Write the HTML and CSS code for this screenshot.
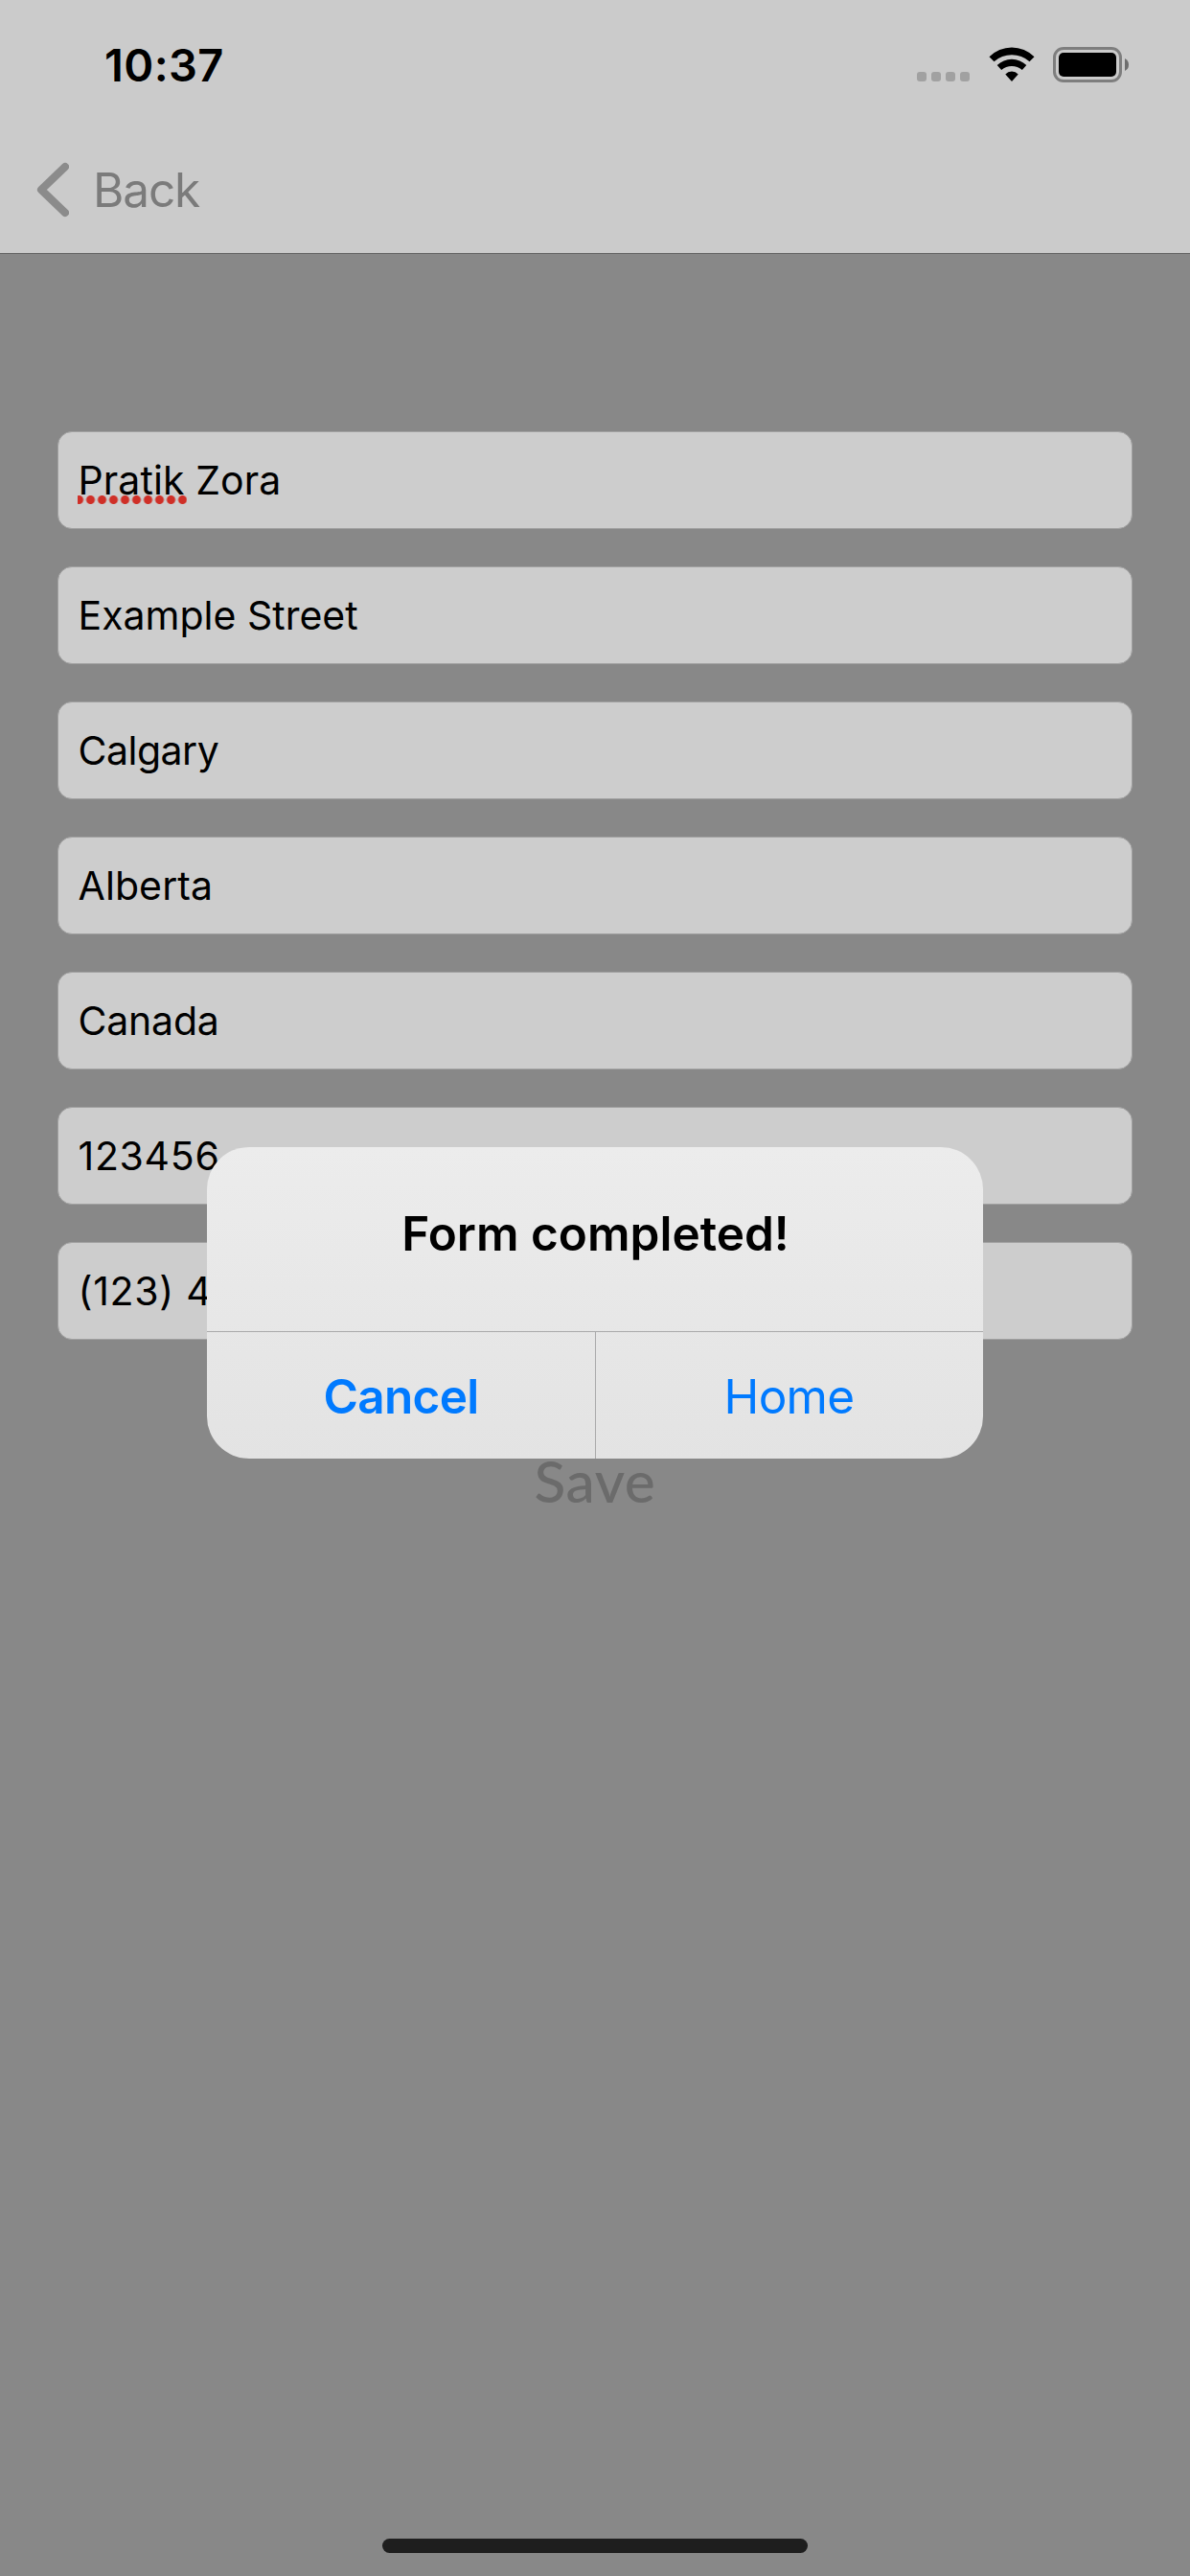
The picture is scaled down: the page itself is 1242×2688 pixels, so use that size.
FILE: index.html
```html
<!DOCTYPE html>
<html lang="en">
<head>
<meta charset="utf-8">
<title>Form</title>
<link rel="stylesheet" href="styles.css">
</head>
<body>
<div class="screen">
  <header class="header">
    <div class="status">
      <span class="time">10:37</span>
      <div class="indicators">
        <span class="cell"><i></i><i></i><i></i><i></i></span>
        <svg class="wifi" width="48" height="37" viewBox="0 0 48 37">
          <path d="M.5 10.3A33 33 0 0 1 47.5 10.3L42.5 15.3A27.8 27.8 0 0 0 5.5 15.3Z"/>
          <path d="M8.7 19A22 22 0 0 1 39.3 19L34.8 24A16.5 16.5 0 0 0 13.2 24Z"/>
          <path d="M17.3 28.4A9 9 0 0 1 30.7 28.4L24 36Z"/>
        </svg>
        <svg class="battery" width="80" height="37" viewBox="0 0 80 37">
          <rect x="1.5" y="1.5" width="69" height="34" rx="9.5" fill="none" stroke="#7e7e7e" stroke-width="3"/>
          <rect x="6" y="6" width="60" height="25" rx="5"/>
          <path d="M75 12Q79 14 79 18.5T75 25Z" fill="#6e6e6e"/>
        </svg>
      </div>
    </div>
    <nav class="nav">
      <svg class="chevron" width="34" height="58" viewBox="0 0 34 58"><path d="M30 5L5 29L30 53" fill="none" stroke="#8b8b8b" stroke-width="8" stroke-linecap="round" stroke-linejoin="round"/></svg>
      <span class="back">Back</span>
    </nav>
  </header>

  <main class="form">
    <div class="field name"><span class="misspelled">Pratik</span>&nbsp;Zora</div>
    <div class="field">Example Street</div>
    <div class="field city">Calgary</div>
    <div class="field name">Alberta</div>
    <div class="field country">Canada</div>
    <div class="field digits">123456</div>
    <div class="field digits">(123) 4</div>
    <div class="save">Save</div>
  </main>

  <footer class="footer"><div class="home-bar"></div></footer>

  <div class="alert">
    <div class="alert-title">Form completed!</div>
    <div class="alert-actions">
      <div class="action cancel">Cancel</div>
      <div class="action">Home</div>
    </div>
  </div>
</div>
</body>
</html>
```
FILE: styles.css
```css
* { box-sizing: border-box; }

body {
  margin: 0;
  background: #888;
  font-family: Inter, "Liberation Sans", sans-serif;
  color: #000;
}

svg { display: block; }

.screen {
  position: relative;
  display: flex;
  flex-direction: column;
  width: 1242px;
  height: 2688px;
  overflow: hidden;
}

.header {
  height: 265px;
  background: #cbcbcb;
  border-bottom: 1px solid #646464;
}

.status {
  display: flex;
  justify-content: space-between;
  height: 132px;
  padding: 40px 63px 0 109px;
}

.time {
  font-size: 47px;
  font-weight: 600;
  line-height: 56px;
  letter-spacing: .4px;
}

.indicators {
  display: flex;
  align-items: flex-start;
  padding-top: 9px;
}

.cell {
  display: flex;
  gap: 5px;
  margin: 26px 19.5px 0 0;
}

.cell i {
  width: 10px;
  height: 10px;
  border-radius: 3px;
  background: #a1a1a1;
}

.wifi { margin-right: 19.5px; }

.nav {
  display: flex;
  align-items: center;
  height: 132px;
  padding-left: 38px;
}

.chevron { margin: -1px 25px 0 0; }

.back {
  font-size: 49.5px;
  letter-spacing: -1.15px;
  color: #7b7b7b;
}

.form {
  display: flex;
  flex: 1;
  flex-direction: column;
  gap: 39px;
  padding: 185px 60px 0;
}

.field {
  display: flex;
  align-items: center;
  height: 102px;
  padding-left: 20.5px;
  border: 1px solid #a2a2a2;
  border-radius: 15px;
  background: #cdcdcd;
  font-size: 41px;
  white-space: pre;
}

.name { letter-spacing: .1px; }
.city { letter-spacing: -.5px; }
.country { letter-spacing: -.2px; }
.digits { letter-spacing: .7px; }

.misspelled { position: relative; }

/* Spell-check dots below the word */
.misspelled::after {
  content: "";
  position: absolute;
  left: -.5px;
  bottom: 0;
  width: 114px;
  height: 9px;
  background: radial-gradient(circle at center, #cf2f27 4.1px, transparent 4.9px) -4.5px 0 / 12px 9px repeat-x;
}

.save {
  margin-top: 71px;
  font-family: Lato, sans-serif;
  font-size: 60.5px;
  font-weight: 500;
  line-height: 73px;
  letter-spacing: .6px;
  text-align: center;
  color: #6b6b6b;
}

.footer {
  display: flex;
  justify-content: center;
  padding-bottom: 24px;
}

.home-bar {
  width: 444px;
  height: 15px;
  border-radius: 8px;
  background: #1e1e1e;
}

.alert {
  position: absolute;
  top: 1197px;
  left: 216px;
  display: flex;
  flex-direction: column;
  width: 810px;
  height: 325px;
  overflow: hidden;
  border-radius: 44px;
  background: linear-gradient(#ececec, #e3e3e3);
}

.alert-title {
  display: flex;
  align-items: center;
  justify-content: center;
  height: 192px;
  padding: 0 0 12px 1px;
  font-size: 49.5px;
  font-weight: 600;
}

.alert-actions {
  display: flex;
  flex: 1;
  border-top: 1px solid #a9a9aa;
}

.action {
  display: flex;
  flex: 1;
  align-items: center;
  justify-content: center;
  padding: 2px 1px 0 0;
  font-size: 49.5px;
  letter-spacing: -.7px;
  color: #007aff;
}

.cancel {
  flex: 0 0 406px;
  border-right: 1px solid #a9a9aa;
  padding-right: 0;
  font-weight: 600;
}
```
